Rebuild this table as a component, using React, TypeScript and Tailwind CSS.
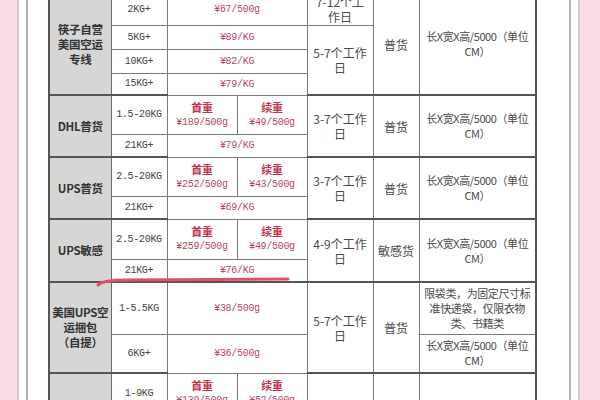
const cell = "border border-[#7a7a7a] text-center align-middle p-0";
const head = "border border-[#6a6a6a] bg-[#d6d6d6] text-center align-middle px-0 text-[11.5px] leading-[15px] font-bold text-[#333] whitespace-nowrap tracking-[-0.3px]";
const kg = cell + " font-['Liberation_Mono','Noto_Sans_CJK_SC',monospace] text-[10px] text-[#444] tracking-[-0.3px]";
const price = cell + " font-['Liberation_Mono','Noto_Sans_CJK_SC',monospace] text-[10px] text-[#b8475f] tracking-[-0.3px]";
const cjk = cell + " px-[3px] text-[12px] leading-[15px] text-[#4a4a4a]";
const note = cell + " text-[11px] leading-[15px] text-[#4a4a4a] tracking-[-0.4px] whitespace-nowrap";
const top = " border-t-2 border-t-[#555]";

function Split({ label, value }: { label: string; value: string }) {
  return (
    <td className={price + " leading-[14px]"}>
      <div className="font-['Noto_Sans_CJK_SC',sans-serif] text-[11px] font-bold text-[#c2364f]">{label}</div>
      <div className="mt-[2px]">{value}</div>
    </td>
  );
}

function Volume() {
  return (
    <>
      长X宽X高/5000（单位
      <br />
      CM）
    </>
  );
}

export default function App() {
  return (
    <div className="flex h-[400px] w-[600px] overflow-hidden bg-[#fadce6] pl-[17px] pr-[20px] font-['Noto_Sans_CJK_SC',sans-serif]">
      <div className="flex flex-1 border-x-2 border-[#d8c8ce] bg-white px-[7px]">
        <div className="flex-1 border-x-2 border-[#b3b3b3] pl-[20px]">
          <div className="relative -mt-2 w-[487px]">
            <table className="w-[487px] table-fixed border-collapse border-2 border-[#555]">
              <colgroup>
                <col className="w-[62px]" />
                <col className="w-[56px]" />
                <col className="w-[70px]" />
                <col className="w-[70px]" />
                <col className="w-[66px]" />
                <col className="w-[46px]" />
                <col className="w-[117px]" />
              </colgroup>
              <tbody>
                <tr className="h-[32px]">
                  <td rowSpan={4} className={head}>
                    筷子自营
                    <br />
                    美国空运
                    <br />
                    专线
                  </td>
                  <td className={kg}>2KG+</td>
                  <td colSpan={2} className={price}>¥67/500g</td>
                  <td className={cjk}>7-12个工作日</td>
                  <td rowSpan={4} className={cjk}>普货</td>
                  <td rowSpan={4} className={note}><Volume /></td>
                </tr>
                <tr className="h-[24px]">
                  <td className={kg}>5KG+</td>
                  <td colSpan={2} className={price}>¥89/KG</td>
                  <td rowSpan={3} className={cjk}>5-7个工作日</td>
                </tr>
                <tr className="h-[24px]">
                  <td className={kg}>10KG+</td>
                  <td colSpan={2} className={price}>¥82/KG</td>
                </tr>
                <tr className="h-[22px]">
                  <td className={kg}>15KG+</td>
                  <td colSpan={2} className={price}>¥79/KG</td>
                </tr>

                <tr className="h-[39px]">
                  <td rowSpan={2} className={head + top}>DHL普货</td>
                  <td className={kg + top}>1.5-20KG</td>
                  <Split label="首重" value="¥189/500g" />
                  <Split label="续重" value="¥49/500g" />
                  <td rowSpan={2} className={cjk + top}>3-7个工作日</td>
                  <td rowSpan={2} className={cjk + top}>普货</td>
                  <td rowSpan={2} className={note + top}><Volume /></td>
                </tr>
                <tr className="h-[23px]">
                  <td className={kg}>21KG+</td>
                  <td colSpan={2} className={price}>¥79/KG</td>
                </tr>

                <tr className="h-[39px]">
                  <td rowSpan={2} className={head + top}>UPS普货</td>
                  <td className={kg + top}>2.5-20KG</td>
                  <Split label="首重" value="¥252/500g" />
                  <Split label="续重" value="¥43/500g" />
                  <td rowSpan={2} className={cjk + top}>3-7个工作日</td>
                  <td rowSpan={2} className={cjk + top}>普货</td>
                  <td rowSpan={2} className={note + top}><Volume /></td>
                </tr>
                <tr className="h-[23px]">
                  <td className={kg}>21KG+</td>
                  <td colSpan={2} className={price}>¥69/KG</td>
                </tr>

                <tr className="h-[40px]">
                  <td rowSpan={2} className={head + top}>UPS敏感</td>
                  <td className={kg + top}>2.5-20KG</td>
                  <Split label="首重" value="¥259/500g" />
                  <Split label="续重" value="¥49/500g" />
                  <td rowSpan={2} className={cjk + top}>4-9个工作日</td>
                  <td rowSpan={2} className={cjk + top}>敏感货</td>
                  <td rowSpan={2} className={note + top}><Volume /></td>
                </tr>
                <tr className="h-[23px]">
                  <td className={kg}>21KG+</td>
                  <td colSpan={2} className={price}>¥76/KG</td>
                </tr>

                <tr className="h-[52px]">
                  <td rowSpan={2} className={head + top}>
                    美国UPS空
                    <br />
                    运捆包
                    <br />
                    （自提）
                  </td>
                  <td className={kg + top}>1-5.5KG</td>
                  <td colSpan={2} className={price + top}>¥38/500g</td>
                  <td rowSpan={2} className={cjk + top}>5-7个工作日</td>
                  <td rowSpan={2} className={cjk + top}>普货</td>
                  <td className={note + top}>
                    限袋类，为固定尺寸标
                    <br />
                    准快递袋，仅限衣物
                    <br />
                    类、书籍类
                  </td>
                </tr>
                <tr className="h-[39px]">
                  <td className={kg}>6KG+</td>
                  <td colSpan={2} className={price}>¥36/500g</td>
                  <td className={note}><Volume /></td>
                </tr>

                <tr className="h-[40px]">
                  <td className={head + top}></td>
                  <td className={kg + top}>1-9KG</td>
                  <Split label="首重" value="¥139/500g" />
                  <Split label="续重" value="¥52/500g" />
                  <td className={cjk + top}></td>
                  <td className={cjk + top}></td>
                  <td className={note + top}></td>
                </tr>
              </tbody>
            </table>
            {/* hand-drawn red underline over the table */}
            <svg className="pointer-events-none absolute left-[48px] top-[284px]" width="200" height="12" viewBox="0 0 200 12">
              <path d="M2 9 Q8 4 30 4 L192 3" fill="none" stroke="#e2506b" strokeWidth="3" strokeLinecap="round" />
            </svg>
          </div>
        </div>
      </div>
    </div>
  );
}
